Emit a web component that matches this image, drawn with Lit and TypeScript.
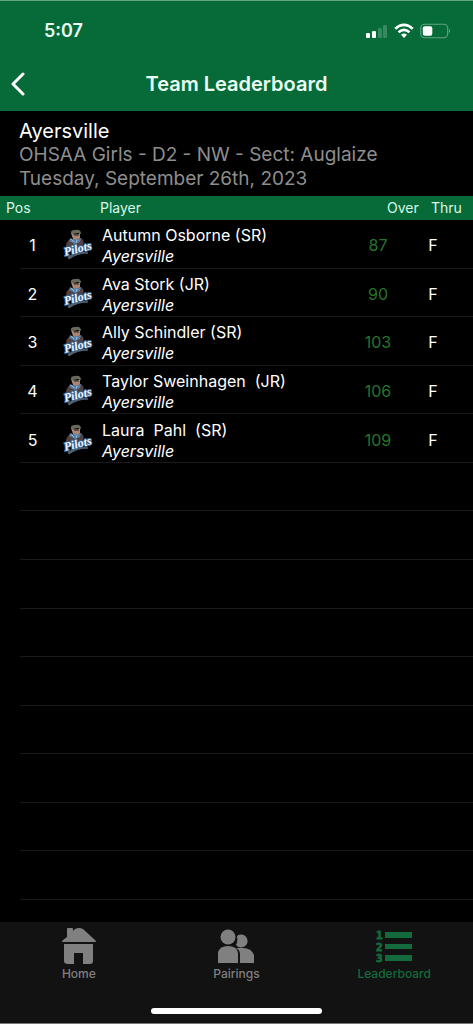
import { LitElement, html, css, svg } from "lit";
import { customElement, property } from "lit/decorators.js";

interface Player {
  pos: number;
  name: string;
  team: string;
  over: number;
  thru: string;
}

const players: Player[] = [
  { pos: 1, name: "Autumn Osborne (SR)", team: "Ayersville", over: 87, thru: "F" },
  { pos: 2, name: "Ava Stork (JR)", team: "Ayersville", over: 90, thru: "F" },
  { pos: 3, name: "Ally Schindler (SR)", team: "Ayersville", over: 103, thru: "F" },
  { pos: 4, name: "Taylor Sweinhagen  (JR)", team: "Ayersville", over: 106, thru: "F" },
  { pos: 5, name: "Laura  Pahl  (SR)", team: "Ayersville", over: 109, thru: "F" },
];

const EMPTY_ROWS = 9;

@customElement("team-logo")
class TeamLogo extends LitElement {
  static styles = css`
    :host { display: block; width: 30px; height: 30px; }
    svg { display: block; overflow: visible; }
    .word {
      font: italic 700 12px "Liberation Serif", serif;
      fill: #f2f6fb;
      stroke: #34618f;
      stroke-width: 2px;
      paint-order: stroke;
      stroke-linejoin: round;
    }
  `;
  render() {
    return html`<svg width="30" height="30" viewBox="0 0 30 30" role="img" aria-label="Pilots">
      <path d="M4 15 Q5 10 10 9 L19 8 Q23 11 21 15 L12 18 L5 19Z" fill="#51413f" />
      <path d="M9 3 Q14 6 18 3 L18 8 Q15 12 11 9Z" fill="#a98673" />
      <path d="M9 4 Q8 0 13 0 Q19 -1 19 4 L16 3 L11 4Z" fill="#69685c" />
      <path d="M12 5h5" stroke="#3c3634" stroke-width="1.2" />
      <path d="M8 8 Q13 11 19 8 L18 12 L13 14 L7 11Z" fill="#557fa8" />
      <path d="M9 9l3 3 M15 10l-1 3" stroke="#9fb9d2" stroke-width="1" />
      <path d="M6 27 Q16 21 26 23 Q15 23 7 29Z" fill="#53606c" stroke="#53606c" />
      <text class="word" x="3" y="26" transform="rotate(-14 3 26)">Pilots</text>
    </svg>`;
  }
}

const tabIcons = {
  home: svg`<svg width="36" height="38" viewBox="0 0 36 38" aria-hidden="true" fill="currentColor">
    <path d="M2 15 Q0 15 2 13 L6 10 V2 Q6 1 7 1 H11 Q12 1 12 2 V4 L14 2 Q18 0 22 2 L34 13 Q36 15 34 15Z"/>
    <path d="M3 17H32V34Q32 37 29 37H22V26H13V37H7Q3 37 3 34Z"/></svg>`,
  pairings: svg`<svg width="38" height="38" viewBox="0 0 38 38" aria-hidden="true" fill="currentColor">
    <circle cx="11" cy="10" r="7.5"/><path d="M1 36V25Q3 19 11 19Q20 19 21 26V36Z"/>
    <path d="M20 9a6.5 6.5 0 1 1-1 9Q21 15 20 9Z"/>
    <path d="M19 21Q22 21 24 21Q34 20 37 28V36H23V27Q23 23 19 21Z"/></svg>`,
  leaderboard: svg`<svg width="38" height="38" viewBox="0 0 38 38" aria-hidden="true" fill="currentColor">
    <g font-family="DejaVu Sans Mono, monospace" font-weight="700" font-size="11" stroke="currentColor" stroke-width=".8">
    <text x="1" y="12">1</text><text x="1" y="24">2</text><text x="1" y="35">3</text></g>
    <path d="M10 5h27v6H10zM10 17h27v5H10zM10 28h27v6H10z"/></svg>`,
};

@customElement("app-root")
class AppRoot extends LitElement {
  @property({ type: Array }) players: Player[] = players;

  static styles = css`
    :host {
      display: flex;
      flex-direction: column;
      min-height: 100vh;
      background: #000;
      color: #fff;
      font-family: Inter, "Liberation Sans", sans-serif;
      --green: #076b39;
    }
    * { box-sizing: border-box; }
    h1, h2, p { margin: 0; font-weight: 400; }
    .top { padding-bottom: 2px; background: var(--green); border-top: 1px solid #63a583; color: #ecfff4; }
    .status {
      display: flex;
      align-items: center;
      justify-content: space-between;
      height: 58px;
      padding: 2px 22px 0 44px;
    }
    .time { font-size: 18px; font-weight: 600; line-height: 20px; }
    .signals { display: flex; align-items: center; gap: 6px; }
    .signals svg { display: block; }
    .nav {
      display: grid;
      grid-template-columns: 40px 1fr 40px;
      align-items: center;
      height: 50px;
    }
    .back {
      height: 44px;
      padding: 0 0 0 10px;
      border: 0;
      background: none;
      color: #fff;
      display: flex;
      align-items: center;
    }
    .title { font-size: 20px; font-weight: 600; line-height: 24px; text-align: center; }
    .event { padding: 8px 19px 5px; font-size: 19px; line-height: 24px; color: #8e8e8e; }
    .event .name { color: #fff; font-size: 20px; }
    .board { display: flex; flex-direction: column; flex: 1; padding-bottom: 22px; }
    thead { display: block; background: var(--green); color: #dcf8e8; }
    th { padding: 0; font-weight: 400; text-align: left; }
    .head {
      display: grid;
      grid-template-columns: 94px 1fr 44px 32px;
      padding: 0 10px 0 6px;
      font-size: 14px;
      line-height: 24px;
    }
    .rows { display: grid; grid-auto-rows: 1fr; flex: 1; }
    .row {
      display: grid;
      grid-template-columns: 25px 37px 1fr 70px 40px;
      align-items: center;
      min-height: 48px;
      margin-left: 20px;
      padding: 3px 20px 0 0;
      border-bottom: 1px solid #19191a;
      font-size: 16px;
    }
    td { padding: 0; }
    .pos, .over, .thru { text-align: center; }
    .logo { display: flex; justify-content: flex-end; margin-right: -10px; }
    .who { padding: 2px 0 0 20px; white-space: pre; }
    .who p { line-height: 21px; }
    .team { font-style: italic; }
    .over { color: #26742b; }
    .tabs {
      display: flex;
      flex-direction: column;
      align-items: center;
      justify-content: space-between;
      height: 102px;
      padding-bottom: 9px;
      background: #121212;
      border-bottom: 1px solid #777;
    }
    .links { display: grid; grid-template-columns: repeat(3, 1fr); align-self: stretch; padding-top: 5px; }
    .tab {
      display: flex;
      flex-direction: column;
      align-items: center;
      color: #808080;
      text-decoration: none;
      font-size: 12px;
      font-weight: 500;
      line-height: 18px;
    }
    .tab svg { display: block; }
    .tab.active { color: #136b3d; }
    .indicator { width: 36%; height: 6px; border-radius: 3px; background: #fff; }
  `;

  render() {
    return html`
      <header class="top">
        <div class="status">
          <span class="time">5:07</span>
          <div class="signals">
            <svg width="22" height="16" viewBox="0 0 22 16" fill="#fff" aria-hidden="true">
              <rect x="0" y="10" width="4" height="5" rx="1" /><rect x="6" y="8" width="4" height="7" rx="1" />
              <rect x="12" y="5" width="4" height="10" rx="1" opacity=".2" /><rect x="17" y="2" width="4" height="13" rx="1" opacity=".2" />
            </svg>
            <svg width="20" height="16" viewBox="0 0 20 16" fill="none" stroke="#fff" stroke-width="2.6" aria-hidden="true">
              <path d="M1.2 5.7Q10-2 18.8 5.7" /><path d="M4.5 9.2Q10 4.5 15.5 9.2" />
              <path d="M7 11.8Q10 9.3 13 11.8L10 15Z" fill="#fff" stroke="none" />
            </svg>
            <svg width="31" height="16" viewBox="0 0 31 16" aria-hidden="true">
              <rect x=".7" y="1.2" width="27" height="13.6" rx="4" fill="none" stroke="#5fa580" stroke-width="1.1" />
              <rect x="2.8" y="3.2" width="9.5" height="9.6" rx="2" fill="#fff" />
              <path d="M29 6q2 2 0 4Z" fill="#72b592" />
            </svg>
          </div>
        </div>
        <nav class="nav">
          <button class="back" aria-label="Back">
            <svg width="16" height="24" viewBox="0 0 16 24" fill="none" stroke="currentColor" stroke-width="3" stroke-linecap="round" stroke-linejoin="round" aria-hidden="true"><path d="M13 2L3 12L13 22" /></svg>
          </button>
          <h1 class="title">Team Leaderboard</h1>
        </nav>
      </header>
      <section class="event">
        <h2 class="name">Ayersville</h2>
        <p>OHSAA Girls - D2 - NW - Sect: Auglaize</p>
        <p>Tuesday, September 26th, 2023</p>
      </section>
      <table class="board">
        <thead>
          <tr class="head"><th>Pos</th><th>Player</th><th>Over</th><th>Thru</th></tr>
        </thead>
        <tbody class="rows">
          ${this.players.map(
            (p) => html`<tr class="row">
              <td class="pos">${p.pos}</td>
              <td class="logo"><team-logo></team-logo></td>
              <td class="who"><p>${p.name}</p><p class="team">${p.team}</p></td>
              <td class="over">${p.over}</td>
              <td class="thru">${p.thru}</td>
            </tr>`
          )}
          ${Array.from({ length: EMPTY_ROWS }, () => html`<tr class="row" aria-hidden="true"><td></td></tr>`)}
        </tbody>
      </table>
      <footer class="tabs">
        <nav class="links">
          <a class="tab" href="#home">${tabIcons.home}<span>Home</span></a>
          <a class="tab" href="#pairings">${tabIcons.pairings}<span>Pairings</span></a>
          <a class="tab active" href="#leaderboard" aria-current="page">${tabIcons.leaderboard}<span>Leaderboard</span></a>
        </nav>
        <div class="indicator"></div>
      </footer>
    `;
  }
}
